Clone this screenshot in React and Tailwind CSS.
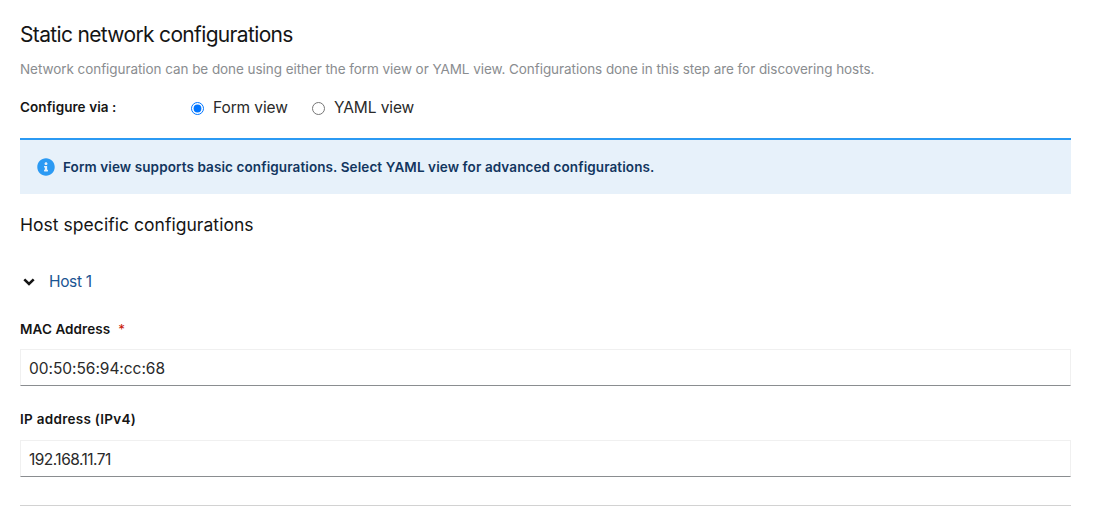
import { useState } from "react";

function Radio({ label, checked, onSelect, className }) {
  return (
    <label className={`flex h-6 items-center whitespace-nowrap ${className}`}>
      <input
        type="radio"
        name="view"
        checked={checked}
        onChange={onSelect}
        className="mt-0.5 mr-[9px] h-[13px] w-[13px] accent-[#0075ff]"
      />
      <span className="pt-px text-[15.5px] tracking-[-0.1px] text-[#2a2a2a]">{label}</span>
    </label>
  );
}

function Field({ id, label, required, value, labelClass, valueClass }) {
  return (
    <div>
      <label htmlFor={id} className={`flex h-5 items-center text-[13.5px] font-semibold ${labelClass}`}>
        {label}
        {required && <span className="ml-2 font-normal text-[#c9190b]">*</span>}
      </label>
      <input
        id={id}
        defaultValue={value}
        className={`block h-[37px] w-full border border-[#f0f0f0] border-b-[#8a8d90] bg-white px-2 pt-0.5 text-[15.5px] text-[#2a2a2a] outline-none ${valueClass}`}
      />
    </div>
  );
}

export default function App() {
  const [view, setView] = useState("form");
  return (
    <main className="h-[506px] overflow-hidden bg-white pt-5 pr-[37.6px] pl-5 font-['Inter','Noto_Sans',sans-serif] text-[#151515]">
      <h1 className="h-[30px] text-[21px] leading-[30px] tracking-[-0.66px] whitespace-nowrap">Static network configurations</h1>
      <p className="mt-[9px] h-5 text-[13.5px] leading-5 tracking-[-0.063px] whitespace-nowrap text-[#8a8d90]">
        Network configuration can be done using either the form view or YAML view. Configurations done in this step are for discovering hosts.
      </p>
      <div className="mt-4 flex h-6 items-center">
        <span className="w-[171px] pt-px text-[13.5px] font-semibold tracking-[0.07px]">Configure via :</span>
        <Radio label="Form view" checked={view === "form"} onSelect={() => setView("form")} className="w-[121px]" />
        <Radio label="YAML view" checked={view === "yaml"} onSelect={() => setView("yaml")} className="" />
      </div>
      <div className="mt-[19px] flex h-14 items-center border-t-2 border-[#2b9af3] bg-[#e7f1fa] pl-[17px]">
        <svg viewBox="0 0 512 512" className="mr-2 h-[18px] w-[18px]" fill="#2b9af3">
          <path d="M256 8C119 8 8 119.100 8 256c0 137 111 248 248 248s248-111 248-248C504 119.100 393 8 256 8zm0 110c23.200 0 42 18.800 42 42s-18.800 42-42 42-42-18.800-42-42 18.800-42 42-42zm56 254c0 6.600-5.400 12-12 12h-88c-6.600 0-12-5.400-12-12v-24c0-6.600 5.400-12 12-12h12v-64h-12c-6.600 0-12-5.400-12-12v-24c0-6.600 5.400-12 12-12h64c6.600 0 12 5.400 12 12v100h12c6.600 0 12 5.400 12 12v24z" />
        </svg>
        <strong className="text-[13.5px] font-semibold tracking-[0.1px] whitespace-nowrap text-[#12365f]">
          Form view supports basic configurations. Select YAML view for advanced configurations.
        </strong>
      </div>
      <h2 className="mt-[18px] h-[26px] text-[17.5px] leading-[26px] tracking-[0.04px]">Host specific configurations</h2>
      <button type="button" className="mt-8 flex h-6 items-center text-[15.5px] tracking-[-0.35px] text-[#1b5593]">
        <svg viewBox="0 0 12 8" className="mr-3.5 ml-[3px] h-2 w-3" fill="none" stroke="#151515" strokeWidth="2.6">
          <path d="M1.3 1.4 6 6l4.700-4.600" />
        </svg>
        Host 1
      </button>
      <div className="mt-[25px]">
        <Field id="mac" label="MAC Address" required value="00:50:56:94:cc:68" labelClass="tracking-[0.08px]" valueClass="mt-2.5 tracking-[-0.04px]" />
      </div>
      <div className="mt-[23px]">
        <Field id="ip" label="IP address (IPv4)" value="192.168.11.71" labelClass="tracking-[0.28px]" valueClass="mt-[11px] tracking-[-0.53px]" />
      </div>
      <hr className="mt-7 border-[#d2d2d2]" />
    </main>
  );
}
